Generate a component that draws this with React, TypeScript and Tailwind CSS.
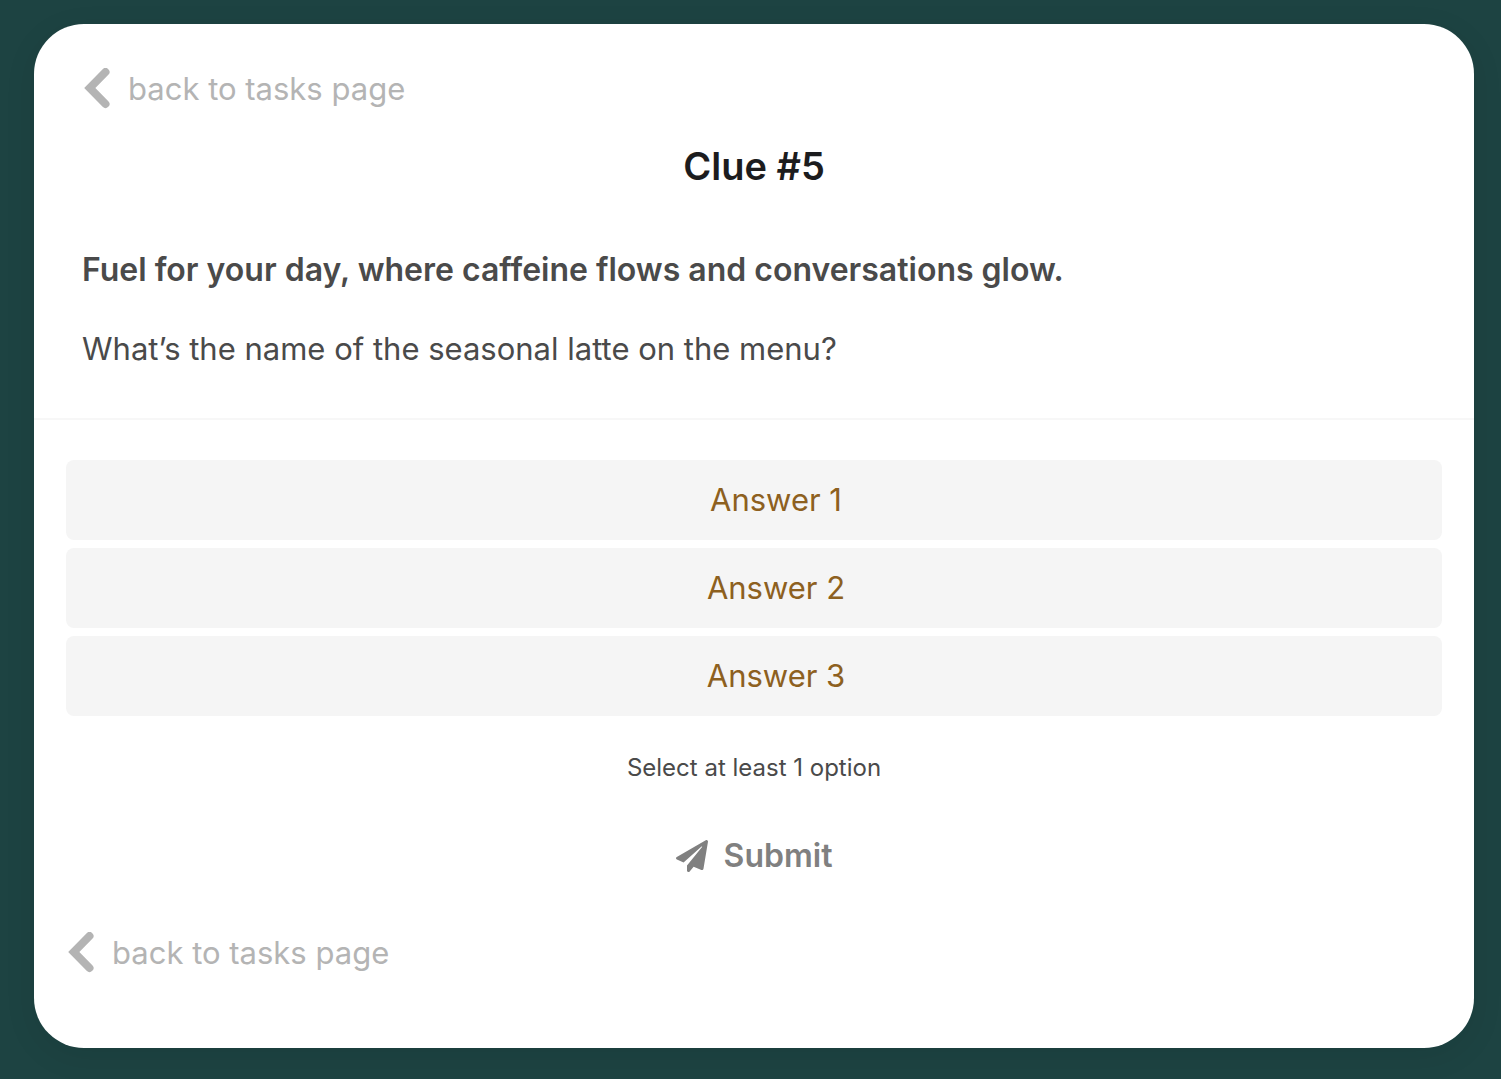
import React from "react";
import { FaPaperPlane } from "react-icons/fa";

const answers = ["Answer 1", "Answer 2", "Answer 3"];

function BackLink() {
  return (
    <a href="#tasks" className="flex w-fit items-center gap-4 text-[31px] leading-[42px] text-[#b4b4b4]">
      <svg
        viewBox="0 0 30 42"
        className="h-[42px] w-[30px]"
        fill="none"
        stroke="currentColor"
        strokeWidth="8"
        strokeLinecap="round"
        strokeLinejoin="miter"
        aria-hidden="true"
      >
        <path d="M23.500 4 7.800 20l15.700 16" />
      </svg>
      back to tasks page
    </a>
  );
}

export default function App() {
  return (
    <div className="min-h-screen bg-[#1d4342] pt-6 pr-[27px] pb-[31px] pl-[34px] font-['Inter',sans-serif] text-[#4a4a4a]">
      <main className="overflow-hidden rounded-[50px] bg-white pb-[74px] shadow-[0_8px_32px_rgba(0,0,0,0.08)]">
        <section className="border-b-2 border-[#f7f7f7] px-12 pt-11 pb-[46px]">
          <BackLink />
          <h1 className="mt-[26px] text-center text-[38px] leading-[60px] font-semibold text-[#1c1c1e]">Clue #5</h1>
          <p className="mt-[50px] text-[32px] leading-[48px] font-semibold">
            Fuel for your day, where caffeine flows and conversations glow.
          </p>
          <p className="mt-8 text-[31px] leading-[46px]">What’s the name of the seasonal latte on the menu?</p>
        </section>
        <form className="px-8 pt-10" onSubmit={(e) => e.preventDefault()}>
          <div className="flex flex-col gap-2">
            {answers.map((a) => (
              <button
                key={a}
                type="button"
                className="h-20 rounded-lg bg-[#f5f5f5] pl-11 text-[31px] text-[#8d6020]"
              >
                {a}
              </button>
            ))}
          </div>
          <p className="mt-8 text-center text-2xl leading-10">Select at least 1 option</p>
          <button
            type="submit"
            className="mx-auto mt-9 flex h-16 items-center gap-4 text-[32px] font-semibold text-[#808080]"
          >
            <FaPaperPlane className="size-8" />
            Submit
          </button>
          <div className="mt-11">
            <BackLink />
          </div>
        </form>
      </main>
    </div>
  );
}
